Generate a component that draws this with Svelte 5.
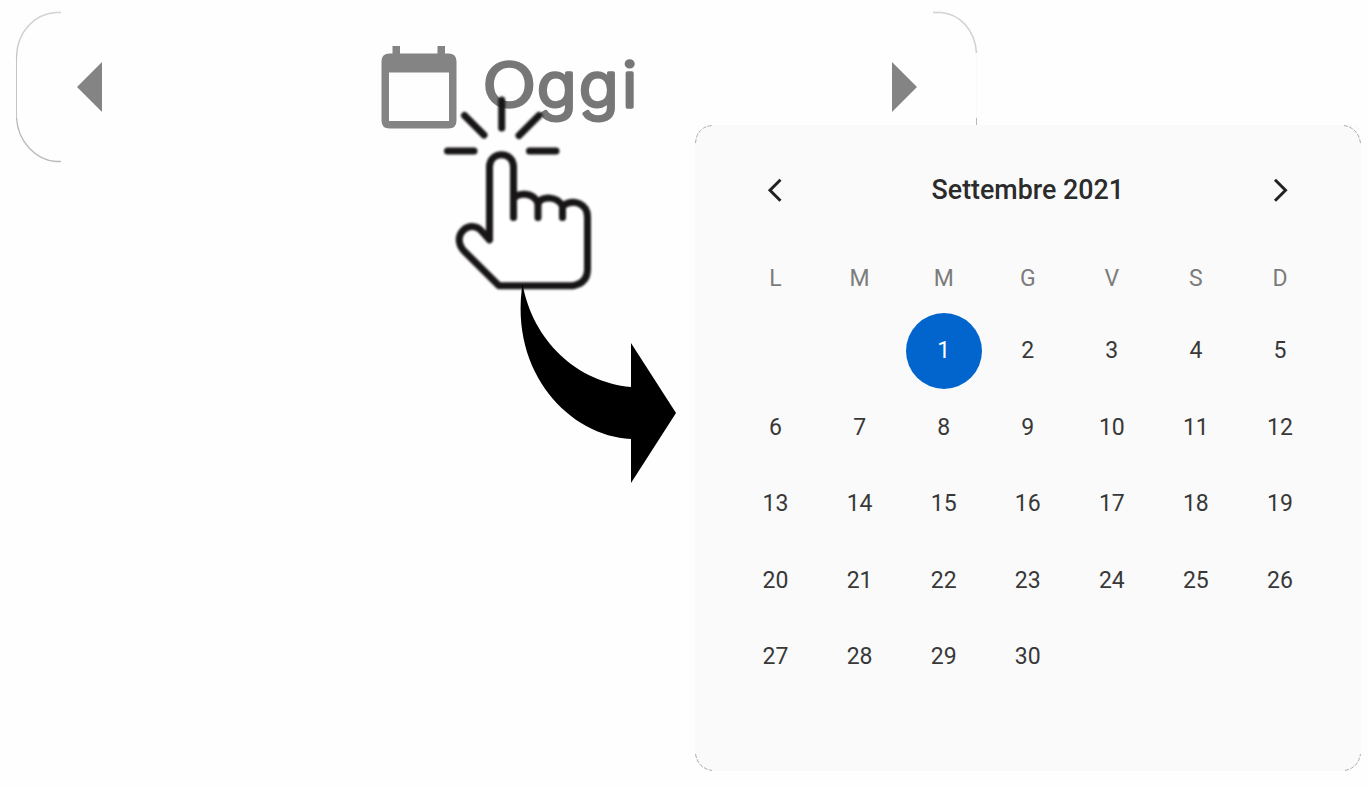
<script>
  const weekdays = ['L', 'M', 'M', 'G', 'V', 'S', 'D'];
  const cells = [null, null, ...Array.from({ length: 30 }, (_, i) => i + 1)];
  let selected = $state(1);
</script>

<main>
  <header class="bar">
    <svg class="outline" viewBox="0 0 980 170" width="980" height="170" fill="none" aria-hidden="true">
      <path d="M61 12.500H56C34 14 17 32 16.500 57" stroke="#d2d2d2" stroke-width="1.600" />
      <path d="M16.500 54V120" stroke="#c4c4c4" />
      <path d="M16.500 118C18 142 36 160 56 161.500H61" stroke="#b9b9b9" stroke-width="1.300" />
      <path d="M933 12.500H941C960 14 975 30 976.500 53" stroke="#d2d2d2" stroke-width="1.600" />
      <path d="M976.500 55V118" stroke="#f9f9f9" />
      <path d="M976.500 118V125" stroke="#b8b8b8" />
    </svg>
    <button class="step" aria-label="Indietro">
      <svg width="25" height="50" viewBox="0 0 25 50"><path d="M25 0V50L0 25Z" fill="#848484" /></svg>
    </button>
    <div class="today">
      <svg width="76" height="83" viewBox="0 0 76 83">
        <path fill="#848484" fill-rule="evenodd" d="M11.500 0H19V7.500H56.500V0H64V7.500H67.500Q75.500 7.500 75.500 15.500V74.500Q75.500 82.500 67.500 82.500H8.500Q.5 82.500 .5 74.500V15.500Q.5 7.500 8.500 7.500H11.500ZM8 26.500V75H68V26.500Z" />
      </svg>
      <svg class="label" width="156" height="83" viewBox="0 0 156 83">
        <text transform="scale(1.130 1)" x="-1" y="61.300">O</text><text transform="scale(1.060 1)" x="50 89.600 130.300" y="61.300">ggi</text>
      </svg>
    </div>
    <button class="step" aria-label="Avanti">
      <svg width="25" height="50" viewBox="0 0 25 50"><path d="M0 0V50L25 25Z" fill="#848484" /></svg>
    </button>
  </header>

  <section class="card">
    <svg class="corners" width="666" height="646" viewBox="0 0 666 646" fill="none" stroke="#999" stroke-width=".8" stroke-dasharray="4 1.500" aria-hidden="true">
      <path d="M.5 18Q2 2 17 .5M649 .5Q663 3 665.500 18M.5 629Q3 643 17 645.500M650 645.500Q663 643 665.500 629" />
      <path stroke="#ddd" stroke-dasharray="1 3" d="M2 9L10 2M655 1L665 10M660 1L665 5M1 636L9 644M656 644L665 636" />
    </svg>
    <div class="month">
      <button aria-label="Mese precedente"><svg width="16" height="24" viewBox="0 0 16 24"><path d="M13.500 1.700L3 12.200L13.500 22.700" /></svg></button>
      <h1>Settembre 2021</h1>
      <button aria-label="Mese successivo"><svg width="16" height="24" viewBox="0 0 16 24"><path d="M2 1.700L12.500 12.200L2 22.700" /></svg></button>
    </div>
    <div class="week">
      {#each weekdays as name}<span>{name}</span>{/each}
    </div>
    <div class="days">
      {#each cells as day}
        {#if day}
          <button class:selected={day === selected} onclick={() => (selected = day)}>{day}</button>
        {:else}
          <span></span>
        {/if}
      {/each}
    </div>
  </section>

  <svg class="pointer" width="250" height="400" viewBox="440 90 250 400" aria-hidden="true">
    <g class="hand" fill="none" stroke="#171516" stroke-width="7" stroke-linecap="round" stroke-linejoin="round">
      <path d="M501.700 100V128M464.500 115.500L484 135M539 115.500L519 135.500M447.500 151H474M529.500 151H556" />
      <path fill="#fff" d="M489.500 240V167C489.500 150.500 513.500 150.500 513.500 167V199C518 192 533 192 538 203C543 196 557 196 562.500 206C574 198 587.500 204 587.500 217V269Q587.500 283 573 285.700H499L464 251C450 235 470 218 482 231.500Z" />
      <path d="M513.500 196V217.500M538 202V217.500M562.500 205V217.500" />
    </g>
    <path d="M522.500 284C533 341 577 382 631 387V343L676 413L631 483V439C570 436 509 373 522.500 284Z" />
  </svg>
</main>

<style>
  :global(body) { margin: 0; background: #fefefe; }
  main { position: relative; width: 1368px; height: 786px; overflow: hidden; font-family: Roboto, sans-serif; }
  button { border: 0; padding: 0; background: none; font: inherit; color: inherit; cursor: pointer; }
  svg { display: block; }
  .bar { position: relative; box-sizing: border-box; width: 977px; height: 162px; padding: 12px 60px 0 77px; display: flex; justify-content: space-between; align-items: center; }
  .outline { position: absolute; left: 0; top: 0; }
  .today { display: flex; gap: 27px; margin-left: 26px; }
  .label { overflow: visible; }
  .label text { font: 300 62px Inter, sans-serif; fill: #777; stroke: #777; stroke-width: 3.500px; stroke-linejoin: round; }
  .card { position: absolute; left: 695px; top: 125px; box-sizing: border-box; width: 666px; height: 646px; padding: 44px 39px 0 38.500px; border-radius: 18px; background: #fafafa; color: #383838; }
  .corners { position: absolute; inset: 0; }
  .month { height: 42px; padding: 0 33px; display: flex; align-items: center; justify-content: space-between; color: #2b2b2b; }
  .month path { fill: none; stroke: #222; stroke-width: 3; }
  h1 { margin: 0; font-size: 26.800px; font-weight: 500; line-height: 42px; }
  .week, .days { display: grid; grid-template-columns: repeat(7, 1fr); justify-items: center; align-items: center; font-size: 23px; }
  .week { height: 40px; margin-top: 47px; color: #7c7c7c; }
  .days { margin-top: 14.600px; grid-auto-rows: 76.500px; }
  .days button { width: 76px; height: 76px; border-radius: 50%; }
  .days .selected { background: #0265ce; color: #fff; }
  .pointer { position: absolute; left: 440px; top: 90px; pointer-events: none; }
  .hand { filter: blur(.9px); }
</style>
